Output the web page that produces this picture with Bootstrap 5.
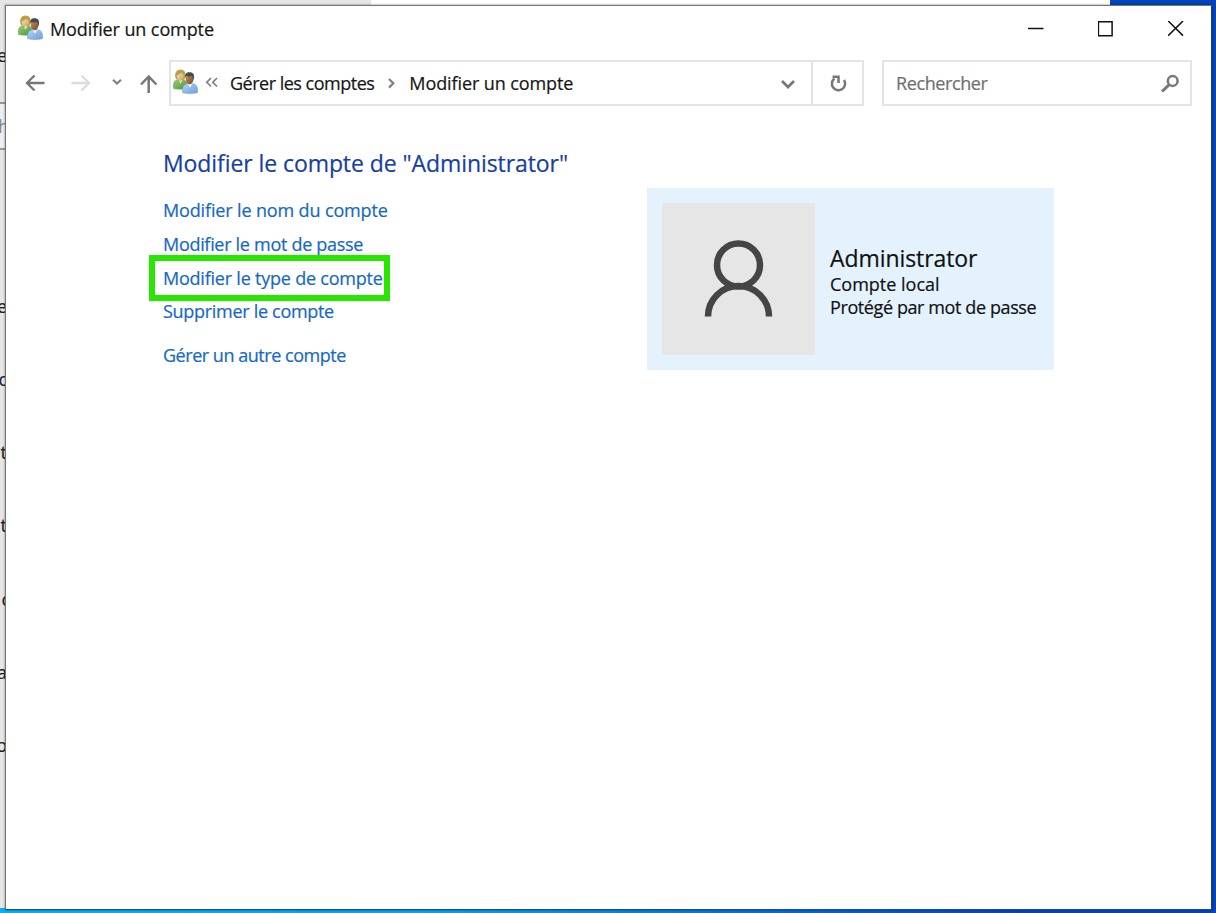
<!DOCTYPE html>
<html lang="fr">
<head>
<meta charset="utf-8">
<meta name="viewport" content="width=device-width, initial-scale=1">
<title>Modifier un compte</title>
<link href="https://cdn.jsdelivr.net/npm/bootstrap@5.3.0/dist/css/bootstrap.min.css" rel="stylesheet">
<style>
html,body{height:100%}
body{overflow:hidden;background:#0444bd;font-family:"Open Sans","Noto Sans",sans-serif;font-size:18px;line-height:24px;color:#161616;-webkit-text-stroke:.2px}
svg{display:block;flex:none}
.back-window{left:0;top:0;width:1110px;height:908px;background:#fff}
.back-side{width:371px;background:#e6e6e6}
.back-bit{left:-23px;width:30px;height:24px;text-align:right;font-size:18px;color:#222}
.back-search{left:-4px;top:102px;width:20px;height:48px;line-height:44px;border:2px solid #999;background:#efefef;color:#888}
.sky-line{left:0;bottom:0;width:1216px;height:5px;background:linear-gradient(90deg,#08b2f2 0,#08a4ee 35%,#0444bd 85%)}
.app-window{left:5px;top:5px;width:1207px;height:905px;border:1px solid #777;border-right-color:#24406f;border-bottom-color:#24506f;background:#fff;box-shadow:0 0 2px rgba(0,0,0,.5)}
.title-bar{height:46px;padding-left:12px}
.caption-text{margin-left:7px}
.caption-tools span{width:70px;height:46px}
.nav-row{height:46px;margin-top:8px;padding-left:19px}
.address-box{width:695px;height:46px;border:2px solid #e4e4e4;padding-left:2px}
.search-box{width:310px;height:46px;border:2px solid #e4e4e4;margin-left:18px;padding:0 11px 0 12px;color:#707070}
.address-box>span,.search-box>span{margin-top:-1px}
.reload-cell{width:51px;border-left:2px solid #e4e4e4}
.page-body{padding:41px 0 0 157px}
.page-title{font-size:23px;line-height:32px;color:#163f9f;font-weight:400;letter-spacing:-.08px}
.task-col{width:484px;padding-top:19.4px}
.task-link{display:block;width:max-content;color:#1468c7;text-decoration:none;white-space:nowrap;margin-bottom:9.6px}
.task-link:hover{text-decoration:underline}
.last-link{margin-top:20px}
.focus-frame{left:-14px;top:-11px;width:241px;height:46px;border:6px solid #28e600}
.account-tile{width:407px;height:182px;margin-top:9px;background:#e4f2fe;padding:15px}
.avatar-box{width:153px;height:152px;background:#e6e6e6}
.tile-text{margin-left:15px;padding-top:3px;line-height:23px;white-space:nowrap;color:#111}
.big-name{font-size:23px;line-height:30px;letter-spacing:-.08px}
.ls-title{letter-spacing:-.1px}
.ls-crumb{letter-spacing:-.5px}
.ls-find{letter-spacing:-.4px}
.ls-name{letter-spacing:-.14px}
.ls-pass{letter-spacing:-.3px}
.ls-type{letter-spacing:-.22px}
.ls-drop{letter-spacing:-.3px}
.ls-other{letter-spacing:-.47px}
.ls-prot{letter-spacing:-.4px}
</style>
</head>
<body>
<svg width="0" height="0" class="position-absolute" aria-hidden="true">
<defs>
<linearGradient id="gGreen" x1="0" y1="0" x2="1" y2="1"><stop offset="0" stop-color="#9bcf79"/><stop offset="1" stop-color="#4a9432"/></linearGradient>
<linearGradient id="gBlue" x1="0" y1="0" x2="1" y2="1"><stop offset="0" stop-color="#b2d5f8"/><stop offset="1" stop-color="#6b9fda"/></linearGradient>
<linearGradient id="gFace" x1="0" y1="0" x2="1" y2="1"><stop offset="0" stop-color="#fbe3bd"/><stop offset="1" stop-color="#cf9d62"/></linearGradient>
<linearGradient id="gFace2" x1="0" y1="0" x2="1" y2="1"><stop offset="0" stop-color="#c98f5c"/><stop offset="1" stop-color="#75492a"/></linearGradient>
<symbol id="users" viewBox="0 0 25 25">
<path d="M.5 19.500V15.500C.7 12.600 2.300 11 5 10.700h5c2.500.3 3.900 2 4 4.500v4.300c-4 .9-9.500.9-13.500 0z" fill="url(#gGreen)" stroke="#5e9e45" stroke-width=".5"/>
<path d="M5.500 10.500l2 4.200 2.500-4.200z" fill="#f1ddba"/>
<path d="M2.300 8C1.500 3.500 4 .6 7.500.5c3.800 0 5.800 2.800 5 7.500-.3 1.700-1.200 2.800-2 3l-6.500-.5C3 10 2.500 9.200 2.300 8z" fill="#b7a345"/>
<path d="M3.800 6.500C5.500 6.200 7 5.200 8 3.800c.8 1 2 1.700 2.700 2.200.2 3.200-1.200 5.700-3.300 5.700S3.800 9.500 3.800 6.500z" fill="url(#gFace)"/>
<path d="M9.500 23.700v-3.500c.2-3 1.800-4.900 4.500-5.400h6c2.700.5 4.300 2.300 4.500 5.200v3.700c-4 1.100-11 1.100-15 0z" fill="url(#gBlue)" stroke="#6a99cf" stroke-width=".5"/>
<path d="M14.200 14.600l2.800 4.100 2.600-4.100z" fill="#eef5fc"/>
<ellipse cx="16.600" cy="10" rx="3.900" ry="5.300" fill="url(#gFace2)"/>
<path d="M12.300 8.800c-.7-3.500 1-5.500 4.300-5.500 3.500 0 5 2.400 4.400 5.700l-.7 2.200c-.2-2-.6-3.500-1.400-4.200-2 .6-4 .5-5.400-.1z" fill="#454a4c"/>
</symbol>
</defs>
</svg>

<div class="back-window position-absolute overflow-hidden">
  <div class="back-side h-100"></div>
  <div class="back-search position-absolute">h</div>
  <span class="back-bit position-absolute" style="top:43px">e</span>
  <span class="back-bit position-absolute" style="top:294px">e</span>
  <span class="back-bit position-absolute" style="top:367px">c</span>
  <span class="back-bit position-absolute" style="top:440px">et</span>
  <span class="back-bit position-absolute" style="top:513px">t</span>
  <span class="back-bit position-absolute" style="top:587px;left:-20px">c</span>
  <span class="back-bit position-absolute" style="top:660px">a</span>
  <span class="back-bit position-absolute" style="top:733px">o</span>
</div>
<div class="sky-line position-absolute"></div>

<main class="app-window position-absolute d-flex flex-column">
  <header class="title-bar d-flex align-items-center">
    <svg width="25" height="25" class="mb-1"><use href="#users"/></svg>
    <span class="caption-text ls-title">Modifier un compte</span>
    <div class="caption-tools d-flex ms-auto">
      <span class="d-flex align-items-center justify-content-center"><svg width="16" height="16" stroke="#111" stroke-width="1.500"><path d="M0 7.500h15.500"/></svg></span>
      <span class="d-flex align-items-center justify-content-center"><svg width="16" height="16" fill="none" stroke="#111" stroke-width="1.500"><path d="M.4.800h13.700v14H.4z"/></svg></span>
      <span class="d-flex align-items-center justify-content-center"><svg width="16" height="16" stroke="#111" stroke-width="1.500"><path d="M.2 0L15 14.600M15 0L.2 14.600"/></svg></span>
    </div>
  </header>

  <nav class="nav-row d-flex align-items-center">
    <svg width="144" height="46" fill="none" stroke-width="2.300">
      <path d="M19.500 23H2M9.500 15.500L2 23l7.500 7.500" stroke="#777"/>
      <path d="M46.500 23H64M56.500 15.500L64 23l-7.500 7.500" stroke="#dcdcdc"/>
      <path d="M88 19.800l4 3.800 4-3.800" stroke="#808080" stroke-width="2.200"/>
      <path d="M123.700 33V16.500M116 24.500l7.700-8 7.700 8" stroke="#777" stroke-width="2.500"/>
    </svg>
    <div class="address-box d-flex align-items-center">
      <svg width="25" height="25" class="mb-1"><use href="#users"/></svg>
      <svg width="32" height="24" fill="none" stroke="#808080" stroke-width="1.700"><path d="M13 7l-4.200 4.300 4.200 4.200M19 7l-4.200 4.300 4.200 4.200"/></svg>
      <span class="ls-crumb">Gérer les comptes</span>
      <svg width="35" height="24" fill="none" stroke="#808080" stroke-width="2.200"><path d="M15 8l4.300 4.300-4.300 4.300"/></svg>
      <span class="ls-title">Modifier un compte</span>
      <svg width="20" height="16" class="ms-auto me-3" fill="none" stroke="#777" stroke-width="2.700"><path d="M7 6l6 6 6-6"/></svg>
      <div class="reload-cell align-self-stretch d-flex align-items-center justify-content-center">
        <svg width="18" height="20" fill="none" stroke="#777" stroke-width="2.500"><path d="M5.500 5.400A6.600 6.600 0 1 0 15 7M3.500 3.800h6v6.300"/></svg>
      </div>
    </div>
    <div class="search-box d-flex align-items-center justify-content-between">
      <span class="ls-find">Rechercher</span>
      <svg width="18" height="19" fill="none" stroke="#777"><circle cx="11.700" cy="7" r="4.900" stroke-width="2.500"/><path d="M8 10.800L1 17.500" stroke-width="3"/></svg>
    </div>
  </nav>

  <section class="page-body">
    <h1 class="page-title mb-0">Modifier le compte de "Administrator"</h1>
    <div class="d-flex">
      <div class="task-col">
        <a href="#" class="task-link ls-name">Modifier le nom du compte</a>
        <a href="#" class="task-link ls-pass">Modifier le mot de passe</a>
        <a href="#" class="task-link ls-type position-relative">Modifier le type de compte<span class="focus-frame position-absolute"></span></a>
        <a href="#" class="task-link ls-drop">Supprimer le compte</a>
        <a href="#" class="task-link ls-other last-link">Gérer un autre compte</a>
      </div>
      <div class="account-tile d-flex">
        <div class="avatar-box d-flex align-items-center justify-content-center">
          <svg width="70" height="80" fill="none" stroke="#454545" stroke-width="6.500"><circle cx="34.500" cy="26" r="21.500"/><path d="M4 77.500A30.500 30.500 0 0 1 65 77.500"/></svg>
        </div>
        <div class="tile-text align-self-center">
          <div class="big-name">Administrator</div>
          <div>Compte local</div>
          <div class="ls-prot">Protégé par mot de passe</div>
        </div>
      </div>
    </div>
  </section>
</main>
<script src="https://cdn.jsdelivr.net/npm/bootstrap@5.3.0/dist/js/bootstrap.bundle.min.js"></script>
</body>
</html>
